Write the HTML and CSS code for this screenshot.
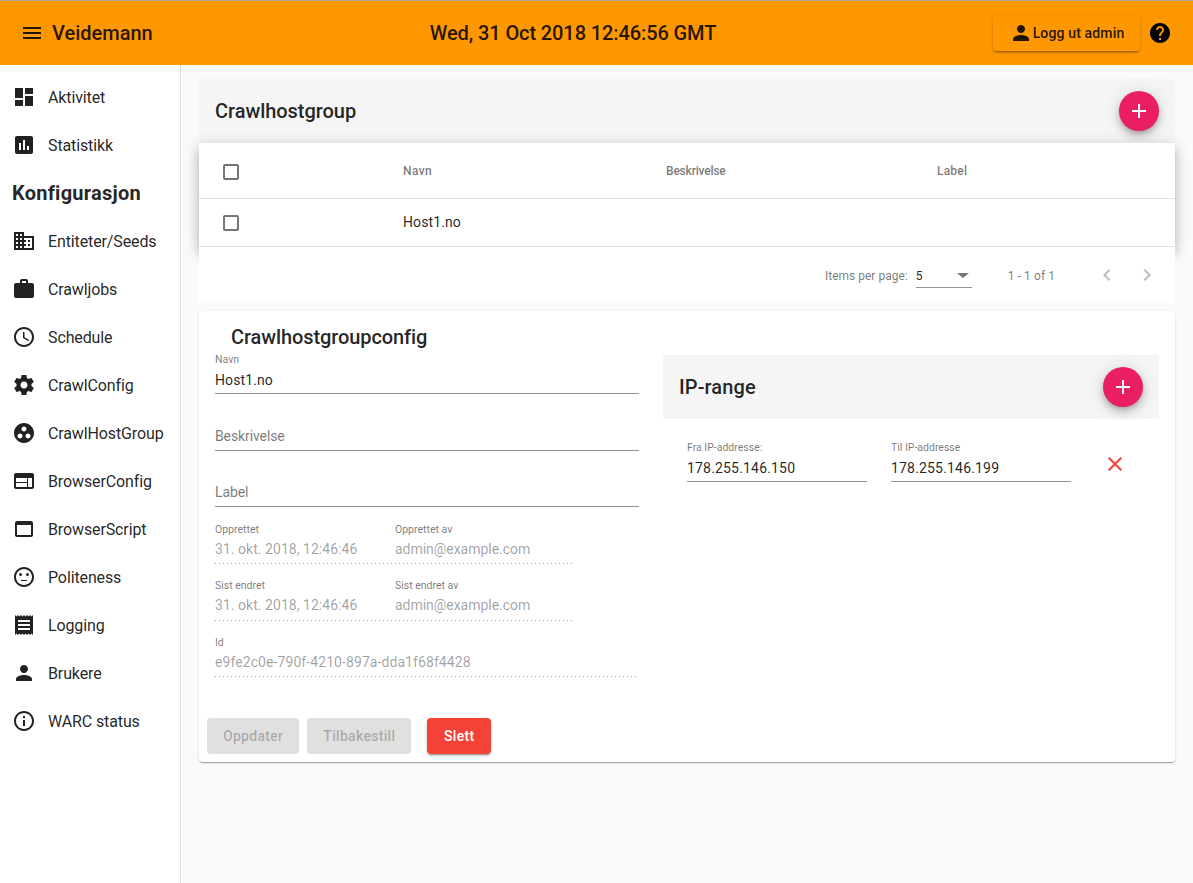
FILE: index.html
```html
<!DOCTYPE html>
<html lang="en">
<head>
    <meta charset="UTF-8">
    <title>Veidemann</title>
    <link rel="stylesheet" href="styles.css">
</head>
<body>
    <header class="toolbar">
        <svg class="icon menu-icon" viewBox="0 0 24 24"><path d="M3 18h18v-2H3v2zm0-5h18v-2H3v2zm0-7v2h18V6H3z"/></svg>
        <span class="app-title">Veidemann</span>
        <span class="clock">Wed, 31 Oct 2018 12:46:56 GMT</span>
        <button class="logout">
            <svg class="icon" viewBox="0 0 24 24"><path d="M12 12c2.21 0 4-1.79 4-4s-1.79-4-4-4-4 1.79-4 4 1.79 4 4 4zm0 2c-2.67 0-8 1.34-8 4v2h16v-2c0-2.66-5.33-4-8-4z"/></svg>
            Logg ut admin
        </button>
        <svg class="icon help-icon" viewBox="0 0 24 24"><path d="M12 2C6.48 2 2 6.48 2 12s4.48 10 10 10 10-4.48 10-10S17.52 2 12 2zm1 17h-2v-2h2v2zm2.07-7.75l-.9.92C13.45 12.9 13 13.5 13 15h-2v-.5c0-1.1.45-2.1 1.17-2.83l1.24-1.26c.37-.36.59-.86.59-1.41 0-1.1-.9-2-2-2s-2 .9-2 2H8c0-2.21 1.79-4 4-4s4 1.79 4 4c0 .88-.36 1.68-.93 2.25z"/></svg>
    </header>

    <div class="layout">
        <nav class="sidenav">
            <a class="nav-item"><svg class="icon" viewBox="0 0 24 24"><path d="M3 13h8V3H3v10zm0 8h8v-6H3v6zm10 0h8V11h-8v10zm0-18v6h8V3h-8z"/></svg>Aktivitet</a>
            <a class="nav-item"><svg class="icon" viewBox="0 0 24 24"><path d="M19 3H5c-1.1 0-2 .9-2 2v14c0 1.1.9 2 2 2h14c1.1 0 2-.9 2-2V5c0-1.1-.9-2-2-2zM9 17H7v-7h2v7zm4 0h-2V7h2v10zm4 0h-2v-4h2v4z"/></svg>Statistikk</a>
            <h3 class="nav-heading">Konfigurasjon</h3>
            <a class="nav-item"><svg class="icon" viewBox="0 0 24 24"><path d="M12 7V3H2v18h20V7H12zM6 19H4v-2h2v2zm0-4H4v-2h2v2zm0-4H4V9h2v2zm0-4H4V5h2v2zm4 12H8v-2h2v2zm0-4H8v-2h2v2zm0-4H8V9h2v2zm0-4H8V5h2v2zm10 12h-8v-2h2v-2h-2v-2h2v-2h-2V9h8v10zm-2-8h-2v2h2v-2zm0 4h-2v2h2v-2z"/></svg>Entiteter/Seeds</a>
            <a class="nav-item"><svg class="icon" viewBox="0 0 24 24"><path d="M20 6h-4V4c0-1.11-.89-2-2-2h-4c-1.11 0-2 .89-2 2v2H4c-1.11 0-1.99.89-1.99 2L2 19c0 1.11.89 2 2 2h16c1.11 0 2-.89 2-2V8c0-1.11-.89-2-2-2zm-6 0h-4V4h4v2z"/></svg>Crawljobs</a>
            <a class="nav-item"><svg class="icon" viewBox="0 0 24 24"><path d="M11.99 2C6.47 2 2 6.48 2 12s4.47 10 9.99 10C17.52 22 22 17.52 22 12S17.52 2 11.99 2zM12 20c-4.42 0-8-3.58-8-8s3.58-8 8-8 8 3.58 8 8-3.58 8-8 8zm.5-13H11v6l5.25 3.15.75-1.23-4.5-2.67z"/></svg>Schedule</a>
            <a class="nav-item"><svg class="icon" viewBox="0 0 24 24"><path d="M19.43 12.98c.04-.32.07-.64.07-.98s-.03-.66-.07-.98l2.11-1.65c.19-.15.24-.42.12-.64l-2-3.46c-.12-.22-.39-.3-.61-.22l-2.49 1c-.52-.4-1.08-.73-1.69-.98l-.38-2.65C14.46 2.18 14.25 2 14 2h-4c-.25 0-.46.18-.49.42l-.38 2.65c-.61.25-1.17.59-1.69.98l-2.49-1c-.23-.09-.49 0-.61.22l-2 3.46c-.13.22-.07.49.12.64l2.11 1.65c-.04.32-.07.65-.07.98s.03.66.07.98l-2.11 1.65c-.19.15-.24.42-.12.64l2 3.46c.12.22.39.3.61.22l2.49-1c.52.4 1.08.73 1.69.98l.38 2.65c.03.24.24.42.49.42h4c.25 0 .46-.18.49-.42l.38-2.65c.61-.25 1.17-.59 1.69-.98l2.49 1c.23.09.49 0 .61-.22l2-3.46c.12-.22.07-.49-.12-.64l-2.11-1.65zM12 15.5c-1.93 0-3.5-1.57-3.5-3.5s1.57-3.5 3.5-3.5 3.5 1.57 3.5 3.5-1.57 3.5-3.5 3.5z"/></svg>CrawlConfig</a>
            <a class="nav-item"><svg class="icon" viewBox="0 0 24 24"><path d="M12 2C6.48 2 2 6.48 2 12s4.48 10 10 10 10-4.48 10-10S17.52 2 12 2zM8 17.5c-1.38 0-2.5-1.12-2.5-2.5s1.12-2.5 2.5-2.5 2.5 1.12 2.5 2.5-1.12 2.5-2.5 2.5zM9.5 8c0-1.38 1.12-2.5 2.5-2.5s2.5 1.12 2.5 2.5-1.12 2.5-2.5 2.5S9.5 9.38 9.5 8zm6.5 9.5c-1.38 0-2.5-1.12-2.5-2.5s1.12-2.5 2.5-2.5 2.5 1.12 2.5 2.5-1.12 2.5-2.5 2.5z"/></svg>CrawlHostGroup</a>
            <a class="nav-item"><svg class="icon" viewBox="0 0 24 24"><path d="M20 4H4c-1.1 0-1.99.9-1.99 2L2 18c0 1.1.9 2 2 2h16c1.1 0 2-.9 2-2V6c0-1.1-.9-2-2-2zm-5 14H4v-4h11v4zm0-5H4V9h11v4zm5 5h-4V9h4v9z"/></svg>BrowserConfig</a>
            <a class="nav-item"><svg class="icon" viewBox="0 0 24 24"><path d="M19 4H5c-1.11 0-2 .9-2 2v12c0 1.1.89 2 2 2h14c1.1 0 2-.9 2-2V6c0-1.1-.89-2-2-2zm0 14H5V8h14v10z"/></svg>BrowserScript</a>
            <a class="nav-item"><svg class="icon" viewBox="0 0 24 24"><circle cx="15.5" cy="9.5" r="1.5"/><circle cx="8.5" cy="9.5" r="1.5"/><path d="M11.99 2C6.47 2 2 6.48 2 12s4.47 10 9.99 10C17.52 22 22 17.52 22 12S17.52 2 11.99 2zM12 20c-4.42 0-8-3.58-8-8s3.58-8 8-8 8 3.58 8 8-3.58 8-8 8zM9 15h6v1H9z"/></svg>Politeness</a>
            <a class="nav-item"><svg class="icon" viewBox="0 0 24 24"><path d="M18 17H6v-2h12v2zm0-4H6v-2h12v2zm0-4H6V7h12v2zM3 22l1.5-1.5L6 22l1.5-1.5L9 22l1.5-1.5L12 22l1.5-1.5L15 22l1.5-1.5L18 22l1.5-1.5L21 22V2l-1.5 1.5L18 2l-1.5 1.5L15 2l-1.5 1.5L12 2l-1.5 1.5L9 2 7.5 3.5 6 2 4.5 3.5 3 2v20z"/></svg>Logging</a>
            <a class="nav-item"><svg class="icon" viewBox="0 0 24 24"><path d="M12 12c2.21 0 4-1.79 4-4s-1.79-4-4-4-4 1.79-4 4 1.79 4 4 4zm0 2c-2.67 0-8 1.34-8 4v2h16v-2c0-2.66-5.33-4-8-4z"/></svg>Brukere</a>
            <a class="nav-item"><svg class="icon" viewBox="0 0 24 24"><path d="M11 7h2v2h-2zm0 4h2v6h-2zm1-9C6.48 2 2 6.48 2 12s4.48 10 10 10 10-4.48 10-10S17.52 2 12 2zm0 18c-4.41 0-8-3.59-8-8s3.59-8 8-8 8 3.59 8 8-3.59 8-8 8z"/></svg>WARC status</a>
        </nav>

        <main class="content">
            <div class="title-bar">
                <span>Crawlhostgroup</span>
                <button class="fab"><svg class="icon" viewBox="0 0 24 24"><path d="M19 13h-6v6h-2v-6H5v-2h6V5h2v6h6v2z"/></svg></button>
            </div>

            <div class="table-wrap">
                <div class="row head-row">
                    <span class="check-cell"><span class="checkbox"></span></span>
                    <span class="col-name">Navn</span>
                    <span class="col-desc">Beskrivelse</span>
                    <span class="col-label">Label</span>
                </div>
                <div class="row body-row">
                    <span class="check-cell"><span class="checkbox"></span></span>
                    <span class="col-name">Host1.no</span>
                </div>
            </div>

            <div class="paginator">
                <span class="page-label">Items per page:</span>
                <span class="page-select"><span class="select-value">5</span><span class="select-arrow"></span></span>
                <span class="page-range">1 - 1 of 1</span>
                <svg class="icon page-btn" viewBox="0 0 24 24"><path d="M15.41 7.41L14 6l-6 6 6 6 1.41-1.41L10.83 12z"/></svg>
                <svg class="icon page-btn" viewBox="0 0 24 24"><path d="M10 6L8.59 7.41 13.17 12l-4.58 4.59L10 18l6-6z"/></svg>
            </div>

            <section class="card">
                <h2 class="card-title">Crawlhostgroupconfig</h2>
                <div class="card-body">
                    <div class="meta-col">
                        <div class="field">
                            <label>Navn</label>
                            <div class="value">Host1.no</div>
                        </div>
                        <div class="field">
                            <div class="value placeholder">Beskrivelse</div>
                        </div>
                        <div class="field">
                            <div class="value placeholder">Label</div>
                        </div>
                        <div class="ro-row">
                            <div class="ro-field date"><label>Opprettet</label><div>31. okt. 2018, 12:46:46</div></div>
                            <div class="ro-field user"><label>Opprettet av</label><div>admin@example.com</div></div>
                        </div>
                        <div class="ro-row">
                            <div class="ro-field date"><label>Sist endret</label><div>31. okt. 2018, 12:46:46</div></div>
                            <div class="ro-field user"><label>Sist endret av</label><div>admin@example.com</div></div>
                        </div>
                        <div class="ro-row">
                            <div class="ro-field wide"><label>Id</label><div>e9fe2c0e-790f-4210-897a-dda1f68f4428</div></div>
                        </div>
                    </div>

                    <div class="range-col">
                        <div class="title-bar range-bar">
                            <span>IP-range</span>
                            <button class="fab"><svg class="icon" viewBox="0 0 24 24"><path d="M19 13h-6v6h-2v-6H5v-2h6V5h2v6h6v2z"/></svg></button>
                        </div>
                        <div class="range-row">
                            <div class="field range-field"><label>Fra IP-addresse:</label><div class="value">178.255.146.150</div></div>
                            <div class="field range-field"><label>Til IP-addresse</label><div class="value">178.255.146.199</div></div>
                            <svg class="icon remove-icon" viewBox="0 0 24 24"><path d="M19 6.41L17.59 5 12 10.59 6.41 5 5 6.41 10.59 12 5 17.59 6.41 19 12 13.41 17.59 19 19 17.59 13.41 12z"/></svg>
                        </div>
                    </div>
                </div>
                <div class="actions">
                    <button class="btn disabled">Oppdater</button>
                    <button class="btn disabled">Tilbakestill</button>
                    <button class="btn danger">Slett</button>
                </div>
            </section>
        </main>
    </div>
</body>
</html>
```

FILE: styles.css
```css
* {
    box-sizing: border-box;
}
body {
    margin: 0;
    height: 883px;
    overflow: hidden;
    font-family: Roboto, sans-serif;
    font-size: 14px;
    color: rgba(0, 0, 0, 0.87);
    background-color: #fafafa;
}
button {
    font-family: inherit;
    border: none;
    padding: 0;
}
.icon {
    width: 24px;
    height: 24px;
    fill: currentColor;
    flex-shrink: 0;
}

/* top bar */
.toolbar {
    display: flex;
    align-items: center;
    height: 65px;
    padding: 0 21px 0 20px;
    background-color: #ff9800;
    border-top: 1px solid #b0a898;
    position: relative;
}
.app-title {
    margin-left: 8px;
    font-size: 20px;
    font-weight: 500;
}
.clock {
    margin-left: 277px;
    font-size: 20px;
    font-weight: 500;
    letter-spacing: -0.1px;
}
.logout {
    display: flex;
    align-items: center;
    justify-content: center;
    width: 147px;
    height: 36px;
    margin-left: auto;
    font-size: 14px;
    font-weight: 500;
    letter-spacing: 0.15px;
    color: rgba(0, 0, 0, 0.87);
    background-color: #ff9800;
    border-radius: 4px;
    box-shadow: 0 3px 1px -2px rgba(0, 0, 0, .2), 0 2px 2px 0 rgba(0, 0, 0, .14), 0 1px 5px 0 rgba(0, 0, 0, .12);
}
.help-icon {
    margin-left: 8px;
    color: #000;
}

/* side menu */
.layout {
    display: flex;
    height: 818px;
}
.sidenav {
    width: 181px;
    flex-shrink: 0;
    padding-top: 8px;
    background-color: #fff;
    border-right: 1px solid #e0e0e0;
}
.nav-item {
    display: flex;
    align-items: center;
    gap: 12px;
    height: 48px;
    padding-left: 12px;
    font-size: 16px;
    letter-spacing: -0.12px;
    color: rgba(0, 0, 0, 0.87);
}
.nav-heading {
    margin: 0;
    height: 48px;
    line-height: 48px;
    padding-left: 12px;
    font-size: 20px;
    font-weight: 700;
    letter-spacing: 0.25px;
    color: rgba(0, 0, 0, 0.87);
}

/* main column */
.content {
    width: 976px;
    margin-left: 18px;
    padding-top: 14px;
}
.title-bar {
    display: flex;
    align-items: center;
    justify-content: space-between;
    height: 64px;
    padding: 0 16px;
    font-size: 20px;
    font-weight: 500;
    letter-spacing: -0.05px;
    background-color: #f5f5f5;
}
.range-bar {
    letter-spacing: 0.1px;
}
.fab {
    display: flex;
    align-items: center;
    justify-content: center;
    width: 40px;
    height: 40px;
    color: #fff;
    background-color: #e91e63;
    border-radius: 50%;
    box-shadow: 0 3px 5px -1px rgba(0, 0, 0, .2), 0 6px 10px 0 rgba(0, 0, 0, .14), 0 1px 18px 0 rgba(0, 0, 0, .12);
}
.table-wrap {
    background-color: #fff;
    box-shadow: 0 5px 5px -3px rgba(0, 0, 0, .2), 0 8px 10px 1px rgba(0, 0, 0, .14), 0 3px 14px 2px rgba(0, 0, 0, .12);
    position: relative;
}
.row {
    display: flex;
    align-items: center;
    border-bottom: 1px solid #e0e0e0;
}
.head-row {
    height: 56px;
    font-size: 12px;
    font-weight: 500;
    color: rgba(0, 0, 0, 0.54);
}
.head-row .checkbox {
    margin-top: 2px;
}
.head-row .col-name {
    letter-spacing: 0.4px;
}
.head-row .col-desc {
    letter-spacing: -0.2px;
}
.head-row .col-label {
    letter-spacing: 0.2px;
}
.body-row {
    height: 48px;
}
.body-row .col-name {
    padding-bottom: 2px;
    letter-spacing: 0.1px;
}
.check-cell {
    display: flex;
    width: 204px;
    padding-left: 24px;
}
.checkbox {
    width: 16px;
    height: 16px;
    border: 2px solid rgba(0, 0, 0, 0.54);
    border-radius: 2px;
}
.col-name {
    width: 263px;
}
.col-desc {
    width: 271px;
}
/* sits over the table shadow */
.paginator {
    display: flex;
    align-items: center;
    height: 56px;
    padding-left: 626px;
    font-size: 12px;
    white-space: nowrap;
    color: rgba(0, 0, 0, 0.54);
    background-color: #fff;
    position: relative;
    z-index: 1;
}
.page-label, .page-range {
    padding-top: 2px;
}
.page-select {
    display: flex;
    align-items: center;
    justify-content: space-between;
    width: 56px;
    height: 25px;
    margin-left: 8px;
    padding: 1px 3px 0 0;
    color: rgba(0, 0, 0, 0.87);
    border-bottom: 1px solid rgba(0, 0, 0, 0.42);
}
.select-value {
    padding-top: 2px;
}
.select-arrow {
    width: 0;
    height: 0;
    border-left: 6px solid transparent;
    border-right: 6px solid transparent;
    border-top: 5px solid rgba(0, 0, 0, 0.54);
}
.page-range {
    margin-left: 36px;
    margin-right: 40px;
    letter-spacing: 0.1px;
}
.page-btn {
    color: rgba(0, 0, 0, 0.26);
    margin-right: 16px;
}
.page-btn:last-child {
    margin-right: 0;
}

/* detail card */
.card {
    margin-top: 8px;
    height: 451px;
    background-color: #fff;
    border-radius: 4px;
    box-shadow: 0 2px 1px -1px rgba(0, 0, 0, .2), 0 1px 1px 0 rgba(0, 0, 0, .14), 0 1px 3px 0 rgba(0, 0, 0, .12);
}
.card-title {
    margin: 0;
    padding: 14px 0 0 32px;
    height: 44px;
    font-size: 20px;
    line-height: 24px;
    font-weight: 500;
    letter-spacing: -0.1px;
}
.card-body {
    display: flex;
    height: 363px;
}
.meta-col {
    width: 424px;
    margin-left: 16px;
}
.field {
    position: relative;
    height: 39px;
    padding-top: 15px;
    border-bottom: 1px solid rgba(0, 0, 0, 0.42);
    margin-bottom: 17.5px;
}
.field label {
    position: absolute;
    top: -1px;
    left: 0;
    font-size: 10.5px;
    line-height: 12px;
    color: rgba(0, 0, 0, 0.54);
}
.value {
    line-height: 20px;
    letter-spacing: 0.1px;
}
.placeholder {
    margin-top: -1px;
    letter-spacing: -0.1px;
    color: rgba(0, 0, 0, 0.54);
}
.ro-row {
    display: flex;
    height: 56.5px;
    margin-top: -1px;
    margin-bottom: 1px;
}
/* dotted line of a disabled input */
.ro-field {
    height: 40.5px;
    font-size: 14px;
    line-height: 20px;
    letter-spacing: 0.04px;
    color: rgba(0, 0, 0, 0.38);
    background-image: linear-gradient(to right, rgba(0, 0, 0, 0.42) 0, rgba(0, 0, 0, 0.42) 33%, transparent 0);
    background-size: 4px 1px;
    background-repeat: repeat-x;
    background-position: bottom left;
}
.ro-field.user {
    letter-spacing: -0.03px;
}
.ro-field.wide {
    letter-spacing: 0.08px;
}
.ro-field label {
    display: block;
    font-size: 10.5px;
    line-height: 12px;
    letter-spacing: 0;
    margin-bottom: 3.25px;
    color: rgba(0, 0, 0, 0.54);
}
.ro-field.date {
    width: 180px;
}
.ro-field.user {
    width: 178px;
}
.ro-field.wide {
    width: 100%;
}
.range-col {
    width: 496px;
    margin-left: 24px;
}
.range-row {
    display: flex;
    gap: 24px;
    padding: 24px 24px 0;
}
.range-field {
    width: 180px;
}
.range-field .value {
    letter-spacing: 0.18px;
}
.remove-icon {
    color: #f44336;
    margin-top: 9px;
    margin-left: 8px;
}
.actions {
    display: flex;
    padding-left: 8px;
    gap: 8px;
}
.btn {
    height: 36px;
    min-width: 64px;
    padding: 0 16px;
    font-size: 14px;
    font-weight: 500;
    letter-spacing: 0.3px;
    border-radius: 4px;
}
.btn.disabled {
    color: rgba(0, 0, 0, 0.26);
    background-color: rgba(0, 0, 0, 0.12);
}
.btn.danger {
    margin-left: 8px;
    color: #fff;
    background-color: #f44336;
    box-shadow: 0 3px 1px -2px rgba(0, 0, 0, .2), 0 2px 2px 0 rgba(0, 0, 0, .14), 0 1px 5px 0 rgba(0, 0, 0, .12);
}
```
